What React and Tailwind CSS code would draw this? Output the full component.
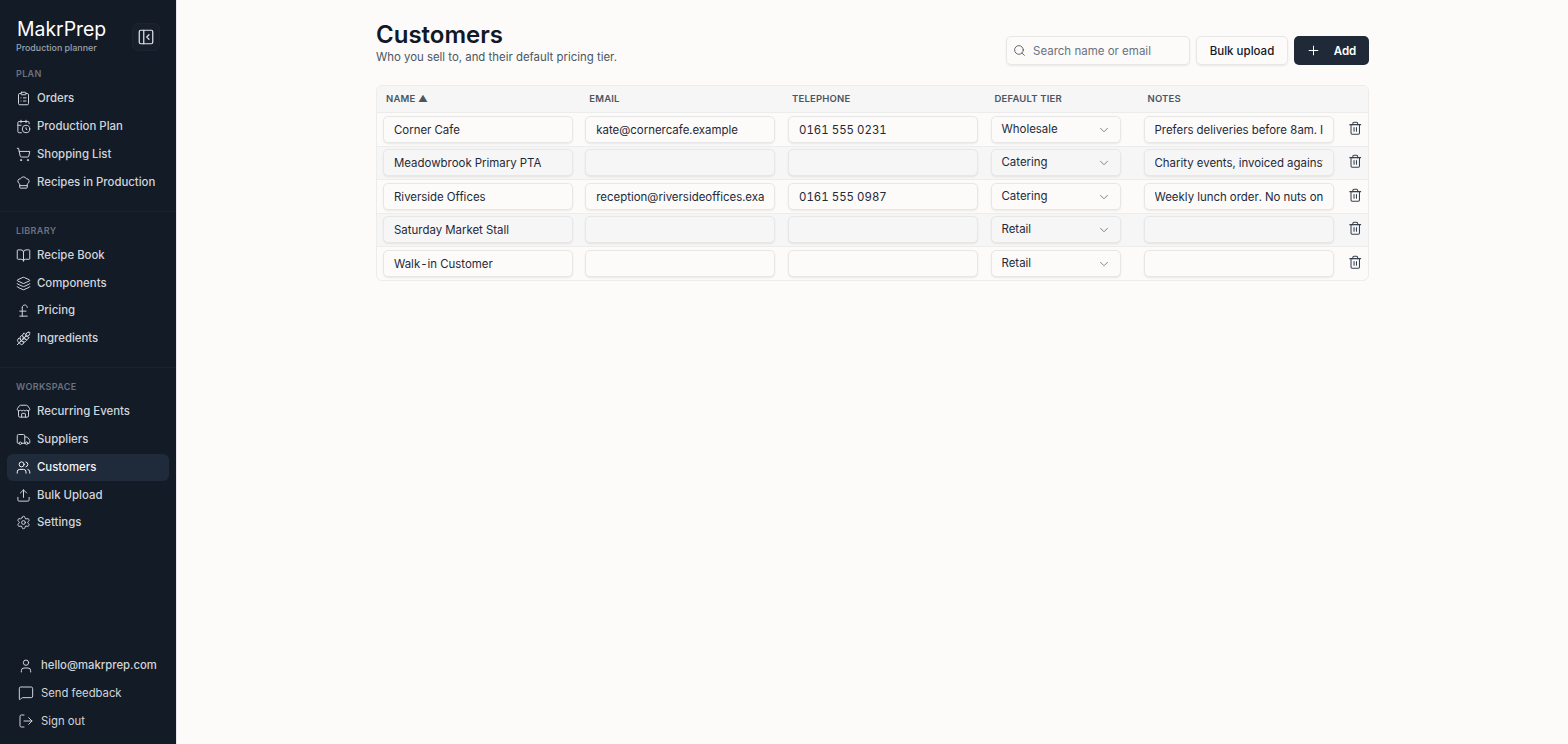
import React from "react";
import {
  BookOpen,
  CalendarClock,
  ChefHat,
  ChevronDown,
  ClipboardList,
  Layers,
  LogOut,
  MessageSquare,
  PanelLeftClose,
  Plus,
  PoundSterling,
  Search,
  Settings,
  ShoppingCart,
  Store,
  Trash2,
  Truck,
  Upload,
  User,
  Users,
  Wheat,
} from "lucide-react";

const navGroups = [
  {
    title: "PLAN",
    className: "mt-[12px]",
    items: [
      { label: "Orders", icon: ClipboardList },
      { label: "Production Plan", icon: CalendarClock },
      { label: "Shopping List", icon: ShoppingCart },
      { label: "Recipes in Production", icon: ChefHat },
    ],
  },
  {
    title: "LIBRARY",
    className: "mt-[27.5px]",
    items: [
      { label: "Recipe Book", icon: BookOpen },
      { label: "Components", icon: Layers },
      { label: "Pricing", icon: PoundSterling },
      { label: "Ingredients", icon: Wheat },
    ],
  },
  {
    title: "WORKSPACE",
    className: "mt-[27.5px]",
    items: [
      { label: "Recurring Events", icon: Store },
      { label: "Suppliers", icon: Truck },
      { label: "Customers", icon: Users, active: true },
      { label: "Bulk Upload", icon: Upload },
      { label: "Settings", icon: Settings },
    ],
  },
];

const customers = [
  {
    name: "Corner Cafe",
    email: "kate@cornercafe.example",
    phone: "0161 555 0231",
    tier: "Wholesale",
    notes: "Prefers deliveries before 8am. Invoice monthly",
  },
  {
    name: "Meadowbrook Primary PTA",
    email: "",
    phone: "",
    tier: "Catering",
    notes: "Charity events, invoiced against school account",
  },
  {
    name: "Riverside Offices",
    email: "reception@riversideoffices.example",
    phone: "0161 555 0987",
    tier: "Catering",
    notes: "Weekly lunch order. No nuts on site",
  },
  { name: "Saturday Market Stall", email: "", phone: "", tier: "Retail", notes: "" },
  { name: "Walk-in Customer", email: "", phone: "", tier: "Retail", notes: "" },
];

const rowGrid =
  "grid grid-cols-[202.25px_202.75px_202.5px_153px_202px_1fr] items-center";

const NavItem = ({ item }) => {
  const Icon = item.icon;
  return (
    <div
      className={`flex h-[27.75px] items-center gap-[6.5px] rounded-md pl-[8.5px] pr-[8px] text-[11.4px] font-medium whitespace-nowrap ${
        item.active ? "bg-[#1f2b3b] text-[#f3f4f6]" : "text-[#d1d5db]"
      }`}
    >
      <Icon size={15} strokeWidth={1.6} className="shrink-0" />
      <span>{item.label}</span>
    </div>
  );
};

const Sidebar = () => (
  <aside className="flex h-screen w-[177px] shrink-0 flex-col border-r border-[#e5e7eb] bg-[#131b26]">
    <div className="flex items-start justify-between pl-[16px] pr-[16px] pt-[17px]">
      <div>
        <div className="pl-px text-[19.4px] leading-[24px] text-white">MakrPrep</div>
        <div className="text-[8.9px] font-medium leading-[14px] text-[#9ca3af]">
          Production planner
        </div>
      </div>
      <button className="mt-[6px] flex h-[28px] w-[28px] items-center justify-center rounded-md border border-[#1b2431] bg-[#171f2b] text-[#e5e7eb]">
        <PanelLeftClose size={18} strokeWidth={1.6} />
      </button>
    </div>
    <nav className="px-[7px]">
      {navGroups.map((group, i) => (
        <div key={group.title} className={`relative ${group.className}`}>
          {i > 0 && (
            <div className="absolute -top-[13px] -left-[7px] -right-[7px] h-px bg-[#1a2330]" />
          )}
          <div className="mb-[4px] px-[9px] text-[9px] font-semibold leading-[14px] tracking-[0.04em] text-[#6b7280]">
            {group.title}
          </div>
          {group.items.map((item) => (
            <NavItem key={item.label} item={item} />
          ))}
        </div>
      ))}
    </nav>
    <div className="mt-auto px-[18px] pb-[9px] text-[11.3px] text-[#d1d5db]">
      <div className="flex h-[27.75px] items-center gap-[7px] font-medium whitespace-nowrap">
        <User size={16} strokeWidth={1.5} className="shrink-0" />
        hello@makrprep.com
      </div>
      <div className="flex h-[27.75px] items-center gap-[7px]">
        <MessageSquare size={16} strokeWidth={1.5} className="shrink-0" />
        Send feedback
      </div>
      <div className="flex h-[27.75px] items-center gap-[7px]">
        <LogOut size={16} strokeWidth={1.5} className="shrink-0" />
        Sign out
      </div>
    </div>
  </aside>
);

const Field = ({ value, muted }) => (
  <input
    readOnly
    value={value}
    className={`mx-[6px] h-[27px] w-[190px] rounded-[5px] border border-[#e7e7e7] px-[10px] pt-[1px] text-[11.45px] tabular-nums text-[#1f2937] shadow-[0_1px_2px_rgba(0,0,0,0.08)] outline-none ${
      muted ? "bg-[#f6f6f6]" : "bg-[#fcfbf9]"
    }`}
  />
);

const CustomerRow = ({ customer, index }) => {
  const muted = index % 2 === 1;
  return (
    <div
      className={`${rowGrid} h-[33.5px] border-t border-[#ececec] ${
        muted ? "bg-[#f6f6f6]" : ""
      }`}
    >
      <Field value={customer.name} muted={muted} />
      <Field value={customer.email} muted={muted} />
      <Field value={customer.phone} muted={muted} />
      <div
        className={`mx-[6px] flex h-[27px] w-[130px] items-center justify-between rounded-[5px] border border-[#e7e7e7] pl-[10px] pr-[9px] pt-[0.5px] text-[11.45px] text-[#1f2937] shadow-[0_1px_2px_rgba(0,0,0,0.08)] ${
          muted ? "bg-[#f6f6f6]" : "bg-[#fcfbf9]"
        }`}
      >
        {customer.tier}
        <ChevronDown size={14} strokeWidth={1.5} className="text-[#6b7280]" />
      </div>
      <Field value={customer.notes} muted={muted} />
      <Trash2 size={14.5} strokeWidth={1.75} className="ml-[8px] mb-[3px] text-[#374151]" />
    </div>
  );
};

const App = () => (
  <div className="flex h-screen overflow-hidden bg-[#fcfbf9] font-['Inter',sans-serif]">
    <Sidebar />
    <main className="min-w-0 flex-1 pr-px">
      <div className="mx-auto w-[1025px] pl-[16.5px] pr-4 pt-[20px]">
        <div className="flex items-end justify-between">
          <div>
            <h1 className="text-[24px] font-semibold leading-[29px] text-[#111827]">Customers</h1>
            <p className="text-[11.4px] leading-[16px] text-[#4b5563]">
              Who you sell to, and their default pricing tier.
            </p>
          </div>
          <div className="flex items-center gap-[6px]">
            <div className="flex h-[29px] w-[184px] items-center gap-[7px] rounded-[5px] border border-[#e7e7e7] pl-[6px] shadow-[0_1px_2px_rgba(0,0,0,0.08)]">
              <Search size={13} strokeWidth={1.6} className="text-[#4b5563]" />
              <span className="pt-[3px] text-[11.5px] text-[#6b7280]">Search name or email</span>
            </div>
            <button className="h-[29px] w-[92px] rounded-[5px] border border-[#e7e7e7] pt-[2px] text-[11.5px] font-medium text-[#111827] shadow-[0_1px_2px_rgba(0,0,0,0.08)]">
              Bulk upload
            </button>
            <button className="flex h-[29.5px] w-[74.5px] items-center justify-center gap-[12.5px] rounded-[5px] bg-[#1f2937] text-[11.5px] font-semibold text-white">
              <Plus size={15} strokeWidth={1.6} />
              <span className="pt-[2px]">Add</span>
            </button>
          </div>
        </div>
        <div className="mt-[20px] overflow-hidden rounded-[6px] border border-[#ececec]">
          <div
            className={`${rowGrid} h-[26px] bg-[#f6f6f6] text-[9.5px] font-semibold tracking-[0.02em] text-[#4b5563]`}
          >
            <div className="pl-[9px]">NAME ▲</div>
            <div className="pl-[10px]">EMAIL</div>
            <div className="pl-[10px]">TELEPHONE</div>
            <div className="pl-[10px]">DEFAULT TIER</div>
            <div className="pl-[10px]">NOTES</div>
          </div>
          {customers.map((customer, i) => (
            <CustomerRow key={customer.name} customer={customer} index={i} />
          ))}
        </div>
      </div>
    </main>
  </div>
);

export default App;
